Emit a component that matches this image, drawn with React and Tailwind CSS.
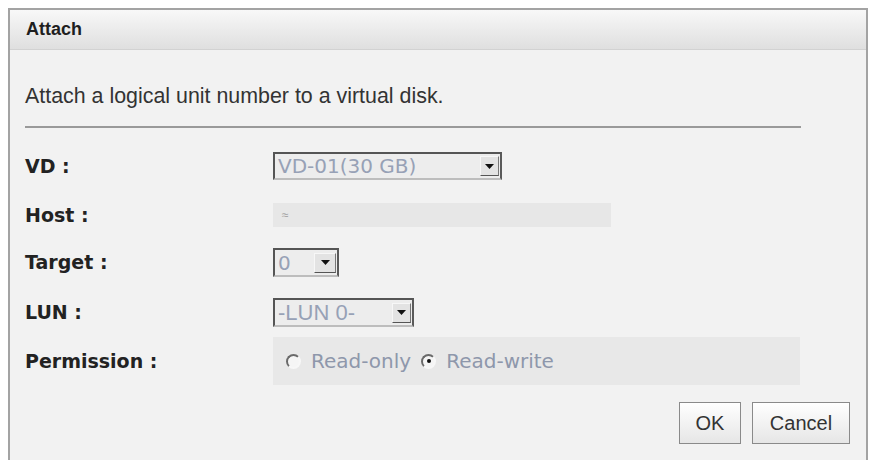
import React, { useState } from 'react';

function Arrow() {
  return (
    <svg width="9" height="5" viewBox="0 0 9 5">
      <path d="M0 0h9L4.5 5z" fill="#111" />
    </svg>
  );
}

function Select({ value, width, btn = 'w-[19px]', textClass = "text-[20px] font-['DejaVu_Sans',sans-serif]" }) {
  return (
    <div
      className={`flex items-center h-full border-2 border-[#555] border-b-[#bdbdbd] border-r-[#5a5a5a] bg-[#ededed] ${width}`}
    >
      <span className={`flex-1 pl-[3px] leading-[22px] text-[#97a1b6] whitespace-nowrap ${textClass}`}>
        {value}
      </span>
      <span
        className={`flex items-center justify-center shrink-0 h-[20px] mr-[1px] bg-[#e3e3e3] border border-[#f7f7f7] border-r-[#777] border-b-[#555] ${btn}`}
      >
        <Arrow />
      </span>
    </div>
  );
}

function Radio({ checked }) {
  return (
    <span className="relative inline-block shrink-0 w-[15px] h-[15px] rounded-full border-2 border-[#f7f7f7] border-t-[#6a6a6a] border-l-[#6a6a6a] bg-[#f5f5f5]">
      {checked && (
        <span className="absolute left-[3.5px] top-[3.5px] w-[4px] h-[4px] rounded-full bg-[#111]" />
      )}
    </span>
  );
}

function Row({ label, className = '', children }) {
  return (
    <div className={`flex items-center ${className}`}>
      <div className="w-[248px] shrink-0 text-[19px] font-bold text-[#222] font-['DejaVu_Sans',sans-serif]">
        {label}
      </div>
      {children}
    </div>
  );
}

export default function App() {
  const [perm, setPerm] = useState('rw');

  return (
    <div className="w-[874px] h-[460px] overflow-hidden bg-white pt-[8px] pl-[8px] font-['Liberation_Sans',sans-serif]">
      <div className="w-[860px] h-[480px] border-2 border-b-0 border-[#a3a3a3] bg-[#f2f2f2]">
        {/* title */}
        <div className="h-[40px] flex items-center pl-[16px] bg-gradient-to-b from-[#f8f8f8] to-[#dfdfdf] border-b border-[#d2d2d2]">
          <span className="text-[18px] font-bold text-[#1e1e1e]">Attach</span>
        </div>

        <div className="pl-[15px] pr-[16px]">
          <p className="mt-[35px] text-[21.4px] leading-[22px] text-[#333]">
            Attach a logical unit number to a virtual disk.
          </p>
          <div className="mt-[19px] w-[776px] h-[2px] bg-[#9a9a9a]" />

          <Row label="VD :" className="mt-[24px] h-[28px]">
            <Select value="VD-01(30 GB)" width="w-[229px]" />
          </Row>

          <Row label="Host :" className="mt-[23px] h-[24px]">
            <div className="w-[338px] h-full bg-[#e7e7e7] flex items-center pl-[9px] text-[12px] text-[#a0a0a0]">
              ≈
            </div>
          </Row>

          <Row label="Target :" className="mt-[21px] h-[29px]">
            <Select value="0" width="w-[66px]" btn="w-[22px]" />
          </Row>

          <Row label="LUN :" className="mt-[21px] h-[29px]">
            <Select value="-LUN 0-" width="w-[141px]" textClass="text-[22px] font-['Liberation_Sans',sans-serif]" />
          </Row>

          <Row label="Permission :" className="mt-[10px] h-[48px]">
            <div className="w-[527px] h-full bg-[#e8e8e8] flex items-center pl-[13px] gap-[10px] text-[20px] text-[#8e97ab] font-['DejaVu_Sans',sans-serif]">
              <label className="flex items-center gap-[10px] cursor-pointer" onClick={() => setPerm('ro')}>
                <Radio checked={perm === 'ro'} />
                <span>Read-only</span>
              </label>
              <label className="flex items-center gap-[10px] cursor-pointer" onClick={() => setPerm('rw')}>
                <Radio checked={perm === 'rw'} />
                <span>Read-write</span>
              </label>
            </div>
          </Row>

          <div className="mt-[17px] flex justify-end gap-[11px]">
            <button className="w-[62px] h-[42px] border border-[#8a8a8a] bg-gradient-to-b from-white to-[#e6e6e6] text-[20px] text-[#333]">
              OK
            </button>
            <button className="w-[98px] h-[42px] border border-[#8a8a8a] bg-gradient-to-b from-white to-[#e6e6e6] text-[20px] text-[#333]">
              Cancel
            </button>
          </div>
        </div>
      </div>
    </div>
  );
}
